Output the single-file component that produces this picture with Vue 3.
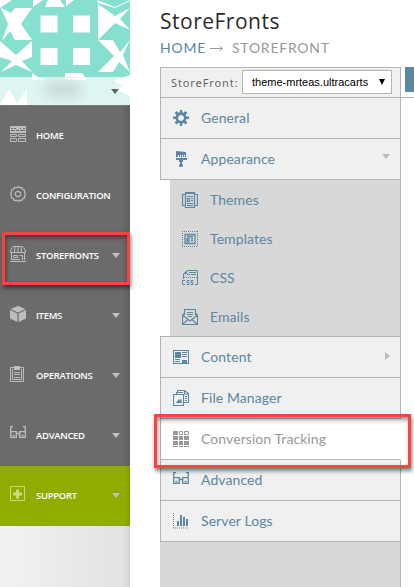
<script setup>
const side = [
  { label: 'HOME', icon: 'home' },
  { label: 'CONFIGURATION', icon: 'config' },
  { label: 'STOREFRONTS', icon: 'store', menu: true, marked: true },
  { label: 'ITEMS', icon: 'items', menu: true },
  { label: 'OPERATIONS', icon: 'ops', menu: true },
  { label: 'ADVANCED', icon: 'glasses', menu: true },
  { label: 'SUPPORT', icon: 'support', menu: true, green: true },
]
const nav = [
  { label: 'General', icon: 'gear' },
  {
    label: 'Appearance', icon: 'brush', arrow: 'down',
    children: [
      { label: 'Themes', icon: 'themes' },
      { label: 'Templates', icon: 'templates' },
      { label: 'CSS', icon: 'css' },
      { label: 'Emails', icon: 'mail' },
    ],
  },
  { label: 'Content', icon: 'content', arrow: 'right' },
  { label: 'File Manager', icon: 'files' },
  { label: 'Conversion Tracking', icon: 'grid', marked: true },
  { label: 'Advanced', icon: 'glasses' },
  { label: 'Server Logs', icon: 'logs' },
]
// f: filled shapes, cut: gaps over a fill, s: solid strokes, d: dotted strokes, w: stroke width
const icons = {
  home: { f: 'M0 0h16v7H0z', cut: 'M1 2.500h2m1 0h2m4 0h1m2 0h2M1 4.500h4m1 0h3m1 0h5', s: 'M.5 8.500h6v2h-6zM8.500 8.500h7v2h-7zM.5 12.500h6v3h-6zM8.500 12.500h7v3h-7z' },
  config: { s: 'M6.300 1.800L8 .6l1.700 1.200 2-.3.9 1.800 1.900.8v2.100L15.500 8l-1 1.700v2.100l-1.900.9-.9 1.800-2-.3L8 15.400l-1.700-1.200-2 .3-.9-1.800-1.900-.9V9.700L.5 8l1-1.800V4.100l1.900-.8.9-1.800zM8 5.300a2.700 2.700 0 1 0 .01 0z', w: 1.200 },
  store: { s: 'M3 .5h10M2.500 1L.5 5v1.500h4V5L5 1m6 0l.5 4v1.500h4V5l-2-4M8 1v5M4.500 6.500h7M1.500 7v7m13-7v7M3.500 9.500h4v2h-4zM9.500 9.500h3V14M0 15.500h16M1 13.500h9' },
  items: { f: 'M8 0l7.500 3L8 6.500.5 3zM0 4l7.400 3.500V16L0 12.500zM16 4v8.500L8.600 16V7.500z' },
  ops: { f: 'M4 0h6v4H4z', s: 'M4 1.500H.5v14h13v-14H10M2.500 3v10.500h9V3M4 6.500h6M4 8.500h6M4 11.500h6' },
  glasses: { s: 'M3 .6H.7v10.700h5.600V5.700H.7M13 .6h2.300v10.700H9.700V5.700h5.600M6 7.500h4M2.500 9.500h2M11.500 9.500h2', w: 1.300 },
  support: { f: 'M6 3.500h3v3h3v3H9v3H6v-3H3v-3h3z', s: 'M.5 .5h14v14H.5z' },
  gear: { f: 'M6.800 0h2.400v2.200l1.500.6 1.700-1.700 2 2-1.700 1.700.6 1.700H16v2.600h-2.700l-.6 1.600 1.700 1.800-2 1.900-1.700-1.600-1.500.6V16H6.800v-2.600l-1.500-.6-1.700 1.600-2-1.900 1.700-1.800-.6-1.600H0V6.500h2.700l.6-1.700-1.700-1.700 2-2 1.700 1.700 1.500-.6zM8 5a3 3 0 1 0 .01 0z' },
  brush: { f: 'M3 0l10 1v5h-1V4h-1v2h-1V4H9v3H8V4H7v2H6V4H5v2H3zM3 7h11v2h-4v2H9v2l1 1v1l-1 1H7l-1-1v-1l1-1v-2H6V9H3z' },
  themes: { f: 'M3 0h10v2H3z', s: 'M3.500 1v14.500h9V1M3 2.500H.5v11H3M13 2.500h2.500v11H13M5 4.500h6M5.500 6.500h2v3h-2zM9 6.500h2M9 8.500h2M5 11.500h6M5 13.500h6', w: 1.200 },
  templates: { d: 'M0 .5h16M0 15.500h16M.5 0v16M15.500 0v16', s: 'M3 3.500h10v9H3zM5 5.500h6M5 7.500h2v3H5zM9 7.500h2M9 9.500h2', w: 1.300 },
  css: { f: 'M5 0v4H1z', s: 'M5 .5h10.500v14H13M1.500 4v5M7 2.500h7M5 4.500h3m1 0h5M3 10.500H.5v4H3M7.500 10.500H5v2h2v2H4.500M11.500 10.500H9v2h2v2H8.500', d: 'M2 7.500h13' },
  mail: { s: 'M2.500 6V.5h11V6M2.500 4L.5 6v9.500h15V6l-2-2M.5 6l7.500 6 7.500-6M1 15l5-4.500M15 15l-5-4.500M5 3.500h6M5 5.500h6M6 7.500h4', w: 1.100 },
  content: { f: 'M2 3h6v6H2zM9 11h5v3H9z', s: 'M.5 1.500h15v13H.5zM9 3.500h5M9 5.500h5M9 7.500h5M2 10.500h5M2 12.500h5', w: 1.100 },
  files: { f: 'M3 13l3-4 1 2 1-3 1 5z', s: 'M.5 4.500h10v11H.5zM3.500 4V2.500h3M4.500 2V.5h7l4 3v9H11M11.500 1v3h4M6 2.500h4M12 6.500h2M12 8.500h2M12 10.500h2', w: 1.100 },
  grid: { s: 'M6.500 .5h3v3h-3zM11.500 .5h4v3h-4z', f: 'M0 0h5v4H0zM0 5h5v4H0zM6 5h4v4H6zM11 5h5v4h-5zM0 10h5v4H0zM6 10h4v4H6zM11 10h5v4h-5zM0 15h5v1H0zM6 15h4v1H6zM11 15h5v1h-5z' },
  logs: { f: 'M4 8h2v5H4zM7 2h2v11H7zM10 4h2v9h-2zM13 6h2v7h-2z', d: 'M.5 0v15M0 15h16' },
}
</script>

<template>
  <div class="page">
    <aside class="sidebar">
      <div class="avatar">
        <svg viewBox="0 0 130 105" width="130" height="105">
          <g fill="#fff">
            <path d="M0 0h12L0 8zM33 0h10l-10 7zM48 0h12l5 7H45zM66 0h8l-8 6zM97 0l18 7 15-7v1l-15 7-17-5z" />
            <path d="M1 8l10 5 4-5h17L21 24l11 16H15l-5-9-8 10 6-17z" />
            <path d="M98 4l17 12 15-8-10 11 10 11-15-7-17 17z" />
            <path d="M0 41l16 14 16-14v16l-10 4 10 11-16-7-15 7 11-11-12-4z" />
            <path d="M98 40h15l7 12 10-12-7 15 7 17-11-10-6 10H98l16-16z" />
            <path d="M40.500 15.500h17v17h-17zM73 15.500h17v17H73zM40.500 48h17v17h-17zM73 48h17v17H73z" />
            <path d="M32 73l10 7H32zM65 80v-7h17l5 7zM130 75l-16 6 9 5-8 3 15 7zM0 105l9-16 8 15 10-15v16z" />
          </g>
        </svg>
        <div class="veil"><span class="smudge"></span><i class="tri dark"></i></div>
      </div>
      <div v-for="m in side" :key="m.label" class="item" :class="{ green: m.green }">
        <svg class="ic" width="16" height="16" viewBox="0 0 16 16">
          <path v-if="icons[m.icon].f" :d="icons[m.icon].f" fill="currentColor" fill-rule="evenodd" />
          <path v-if="icons[m.icon].cut" :d="icons[m.icon].cut" stroke="#6b6b6b" />
          <path v-if="icons[m.icon].s" :d="icons[m.icon].s" fill="none" stroke="currentColor" :stroke-width="icons[m.icon].w || 1" />
        </svg>
        <span>{{ m.label }}</span>
        <i v-if="m.menu" class="tri"></i>
        <div v-if="m.marked" class="mark"></div>
      </div>
    </aside>
    <main>
      <h1>StoreFronts</h1>
      <div class="crumb"><b>HOME</b><svg width="14" height="9" viewBox="0 0 14 9"><path d="M0 4.500h12M9.500 2l3 2.500-3 2.500" fill="none" stroke="#999" /></svg><span>STOREFRONT</span></div>
      <div class="top">
        <div class="picker">
          <label>StoreFront:</label>
          <div class="select"><span>theme-mrteas.ultracarts</span><i></i></div>
        </div>
        <div class="rest"><div class="tab"></div></div>
      </div>
      <nav>
        <template v-for="n in nav" :key="n.label">
          <div class="row" :class="{ active: n.marked }">
            <svg class="ic" width="16" height="16" viewBox="0 0 16 16">
              <path v-if="icons[n.icon].f" :d="icons[n.icon].f" fill="currentColor" fill-rule="evenodd" />
              <path v-if="icons[n.icon].s" :d="icons[n.icon].s" fill="none" stroke="currentColor" :stroke-width="icons[n.icon].w || 1" />
              <path v-if="icons[n.icon].d" :d="icons[n.icon].d" stroke="currentColor" stroke-dasharray="1 1" />
            </svg>
            <span>{{ n.label }}</span>
            <i v-if="n.arrow" class="arr" :class="n.arrow"></i>
            <div v-if="n.marked" class="mark"></div>
          </div>
          <div v-if="n.children" class="sub">
            <div v-for="c in n.children" :key="c.label" class="subrow">
              <svg class="ic" width="16" height="16" viewBox="0 0 16 16">
                <path v-if="icons[c.icon].f" :d="icons[c.icon].f" fill="currentColor" />
                <path v-if="icons[c.icon].s" :d="icons[c.icon].s" fill="none" stroke="currentColor" :stroke-width="icons[c.icon].w || 1" />
                <path v-if="icons[c.icon].d" :d="icons[c.icon].d" stroke="currentColor" stroke-dasharray="1 1" />
              </svg>
              <span>{{ c.label }}</span>
            </div>
          </div>
        </template>
        <div class="fill"></div>
      </nav>
    </main>
  </div>
</template>

<style scoped>
* { box-sizing: border-box; }
.page { display: flex; width: 414px; height: 587px; background: #fff; overflow: hidden; }
.sidebar { width: 130px; flex: none; background: linear-gradient(90deg, #f2f2f2, #e3e3e3 94%, #d4d4d4); }
.avatar { height: 106px; background: #87dfd0; display: grid; border-bottom: 1px solid #777; }
.avatar svg, .veil { grid-area: 1 / 1; }
.veil { align-self: end; height: 28px; background: rgba(255, 255, 255, .72); display: flex; align-items: center; padding: 0 11px 0 45px; justify-content: space-between; }
.smudge { width: 36px; height: 14px; margin-top: -4px; border-radius: 8px; background: #c6d6d3; filter: blur(6px); }
.item { position: relative; height: 60px; display: flex; align-items: center; padding: 0 10px; color: #bebebe; background: linear-gradient(90deg, #6b6b6b 94%, #5f5f5f); }
.item.green { background: linear-gradient(90deg, #8fac00 96%, #829d00); color: #c9da7e; }
.item .ic { flex: none; margin-top: -4px; }
.item span { margin-left: 10px; margin-top: -1px; color: #fff; font: 600 9.500px/14px "Open Sans", sans-serif; letter-spacing: -.3px; }
.tri { margin-left: auto; margin-top: -2px; border: 4px solid transparent; border-top: 5px solid #c0c0c0; border-bottom: 0; }
.tri.dark { border-top-color: #5d6664; margin-top: 0; }
.mark { position: absolute; z-index: 2; border: 3px solid #fa4242; box-shadow: 1px 3px 4px rgba(0, 0, 0, .5), inset 1px 3px 4px rgba(0, 0, 0, .4); }
.item .mark { left: 2px; top: 6px; width: 128px; height: 53px; }
main { flex: 1; padding-left: 30px; display: flex; flex-direction: column; }
h1 { margin: 7px 0 0; font: 400 21px/28px "Open Sans", sans-serif; letter-spacing: .5px; color: #2b2b2b; height: 28px; }
.crumb { height: 26px; display: flex; align-items: center; font: 14px/26px Lato, sans-serif; letter-spacing: .75px; color: #999; }
.crumb b { font-weight: 400; color: #5c87a1; }
.crumb svg { margin: 0 8px 0 4px; }
.top { display: flex; height: 31px; margin-top: 6px; }
.picker { width: 241px; background: #f0f0f0; border: 1px solid #b5b5b5; display: flex; align-items: center; padding-left: 10px; }
.picker label { width: 71px; font: 11px/20px "Noto Sans", sans-serif; letter-spacing: .9px; color: #666; }
.select { width: 150px; height: 24px; margin-top: -1px; border: 1px solid #b5b5b5; background: #fff; display: flex; align-items: center; justify-content: space-between; padding: 0 6px 0 9px; font: 11px/20px "Liberation Sans", sans-serif; color: #000; }
.select i { border: 3px solid transparent; border-top: 6px solid #000; border-bottom: 0; }
.rest { flex: 1; border-bottom: 1px solid #b5b5b5; padding-left: 4px; }
.tab { height: 25px; background: #5c87a1; }
nav { width: 241px; flex: 1; display: flex; flex-direction: column; font: 14px/20px Lato, sans-serif; color: #5c87a1; }
.row { position: relative; flex: none; height: 41px; background: #f0f0f0; border: 1px solid #b5b5b5; border-top: 0; display: flex; align-items: center; padding: 0 10px 0 12px; }
.row span { margin-left: 12px; letter-spacing: .08px; }
.row.active { background: #fff; color: #999; border-right-color: #fff; }
.row .mark { left: -7px; top: -5px; width: 257px; height: 54px; }
.arr { margin-left: auto; }
.down { border: 4px solid transparent; border-top: 5px solid #bbb; border-bottom: 0; margin-top: -6px; }
.right { border: 4px solid transparent; border-left: 5px solid #bbb; border-right: 0; margin-top: -3px; }
.sub { margin-left: 10px; height: 157px; flex: none; background: #d8d8d8; border-right: 1px solid #b5b5b5; }
.sub + .row { height: 42px; margin-top: -1px; border-top: 1px solid #b5b5b5; z-index: 1; }
.subrow { height: 39px; display: flex; align-items: center; padding: 1px 0 0 12px; }
.subrow span { margin-left: 12px; letter-spacing: .08px; }
.fill { flex: 1; background: #d8d8d8; border-right: 1px solid #b5b5b5; }
</style>

<style>
body { background: #fff; }
</style>
